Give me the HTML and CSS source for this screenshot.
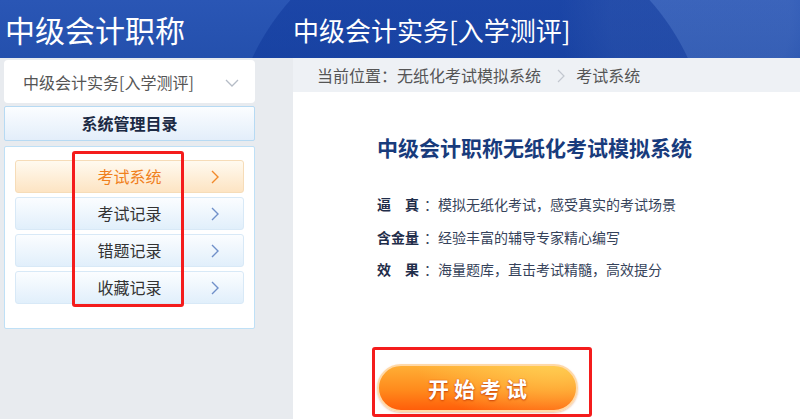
FILE: index.html
```html
<!DOCTYPE html>
<html lang="zh-CN">
<head>
  <meta charset="UTF-8"/>
  <title>中级会计职称 – 无纸化考试模拟系统</title>
  <link rel="stylesheet" href="styles.css">
</head>
<body>
  <header class="top">
    <div class="brand">中级会计职称</div>
    <div class="course-title">中级会计实务[入学测评]</div>
  </header>

  <div class="page">
    <aside class="side">
      <div class="course-select">
        <span>中级会计实务[入学测评]</span>
        <svg class="caret" width="14" height="8" viewBox="0 0 14 8"><polyline points="1,1 7,7 13,1" fill="none" stroke="#b5bcc6" stroke-width="1.3"/></svg>
      </div>
      <div class="menu-title">系统管理目录</div>
      <div class="menu">
        <a class="menu-item active">考试系统<svg class="arr" width="8" height="14" viewBox="0 0 8 14"><polyline points="1,1 7,7 1,13" fill="none" stroke="#f2892a" stroke-width="1.4"/></svg></a>
        <a class="menu-item">考试记录<svg class="arr" width="8" height="14" viewBox="0 0 8 14"><polyline points="1,1 7,7 1,13" fill="none" stroke="#6f8fc9" stroke-width="1.4"/></svg></a>
        <a class="menu-item">错题记录<svg class="arr" width="8" height="14" viewBox="0 0 8 14"><polyline points="1,1 7,7 1,13" fill="none" stroke="#6f8fc9" stroke-width="1.4"/></svg></a>
        <a class="menu-item">收藏记录<svg class="arr" width="8" height="14" viewBox="0 0 8 14"><polyline points="1,1 7,7 1,13" fill="none" stroke="#6f8fc9" stroke-width="1.4"/></svg></a>
        <div class="mark mark-menu"></div>
      </div>
    </aside>

    <main class="main">
      <div class="crumb">
        当前位置：无纸化考试模拟系统
        <svg class="sep" width="8" height="14" viewBox="0 0 8 14"><polyline points="1,1 7,7 1,13" fill="none" stroke="#c2c7cf" stroke-width="1.2"/></svg>
        考试系统
      </div>
      <div class="intro">
        <h1>中级会计职称无纸化考试模拟系统</h1>
        <ul class="features">
          <li><b class="lbl">逼真</b>：模拟无纸化考试，感受真实的考试场景</li>
          <li><b class="lbl">含金量</b>：经验丰富的辅导专家精心编写</li>
          <li><b class="lbl">效果</b>：海量题库，直击考试精髓，高效提分</li>
        </ul>
        <div class="start-wrap">
          <button class="start">开始考试</button>
          <div class="mark mark-start"></div>
        </div>
      </div>
    </main>
  </div>
</body>
</html>
```

FILE: styles.css
```css
* { box-sizing:border-box; margin:0; padding:0 }
html, body {
  width:100%; height:100%;
  font-family:"Noto Sans CJK SC", "Noto Sans", sans-serif;
  background:#e8ebef; color:#333;
  overflow:hidden;
}

/* header */
.top {
  height:58px; display:flex; align-items:center;
  color:#fff;
  background:
    radial-gradient(circle at 470px 160px, rgba(10,50,150,.45) 0 240px, rgba(10,50,150,0) 241px),
    radial-gradient(circle at 700px 20px, rgba(120,150,210,.22) 0 90px, rgba(120,150,210,0) 140px),
    linear-gradient(#2a56b5, #2450ad);
}
.brand { width:293px; padding-left:5px; font-size:30px; }
.course-title { font-size:26px; }

.page { display:flex; height:361px; }

/* sidebar */
.side { width:293px; padding:2px 38px 0 4px; }
.course-select {
  height:43px; background:#fff; border-radius:4px;
  display:flex; align-items:center; justify-content:space-between;
  padding:0 16px 0 19px;
  font-size:16px; color:#555;
}
.course-select .caret { margin-top:2px }
.menu-title {
  margin-top:3px; height:35px;
  border:1px solid #b7daf3; border-radius:2px;
  background:linear-gradient(#fbfdff, #e3eefa);
  text-align:center; line-height:33px;
  font-size:16px; font-weight:bold; color:#1c2a44;
}
.menu {
  position:relative;
  margin-top:5px; height:183px;
  background:#fff; border:1px solid #bfe0f6; border-radius:2px;
  padding:13px 10px 0;
}
.menu-item {
  position:relative; display:block;
  height:33px; margin-bottom:4px;
  border:1px solid #d8e9f7; border-radius:3px;
  background:linear-gradient(#fbfdff, #e1effb);
  text-align:center; line-height:31px;
  font-size:16px; color:#333;
}
.menu-item.active {
  border-color:#f6dcb8;
  background:linear-gradient(#fffaf0, #fde4c3);
  color:#f0801c;
}
.menu-item .arr { position:absolute; right:24px; top:9px; }

/* red annotation frames */
.mark { position:absolute; border:3px solid #f41c1c; border-radius:3px; pointer-events:none; }
.mark-menu { left:67px; top:4px; width:112px; height:156px; }

/* main */
.main { flex:1; background:#fff; }
.crumb {
  height:34px; background:#eef1f5;
  padding-left:24px; line-height:34px;
  font-size:16px; color:#555;
}
.crumb .sep { margin:0 8px 0 12px; vertical-align:-1px; }
.intro { padding:41px 0 0 84px; }
.intro h1 { font-size:21px; font-weight:bold; color:#183b7c; line-height:28px; }
.features { list-style:none; margin-top:27px; }
.features li { font-size:14px; line-height:33px; color:#35425a; height:32.5px; }
.features .lbl {
  display:inline-block; width:42px; margin-right:5px;
  text-align:justify; text-align-last:justify;
  color:#1f2d4a;
}
.start-wrap { position:relative; margin-top:78px; width:201px; }
.start {
  display:block; width:201px; height:48px;
  border:2px solid #ffd9a8; border-radius:24px;
  background:
    radial-gradient(ellipse 140px 70px at 175px -10px, rgba(255,214,90,.85), rgba(255,214,90,0) 100%),
    linear-gradient(#ffae35, #ff8a1c 55%, #ff5e0a);
  box-shadow:0 1px 2px rgba(200,80,0,.35);
  color:#fff; font-family:inherit; font-size:21px; font-weight:bold; letter-spacing:5px;
  text-shadow:0 1px 2px #c8420a, 0 0 1px #c8420a;
  padding-left:5px;
}
.mark-start { left:-5px; top:-17px; width:220px; height:70px; }
```
